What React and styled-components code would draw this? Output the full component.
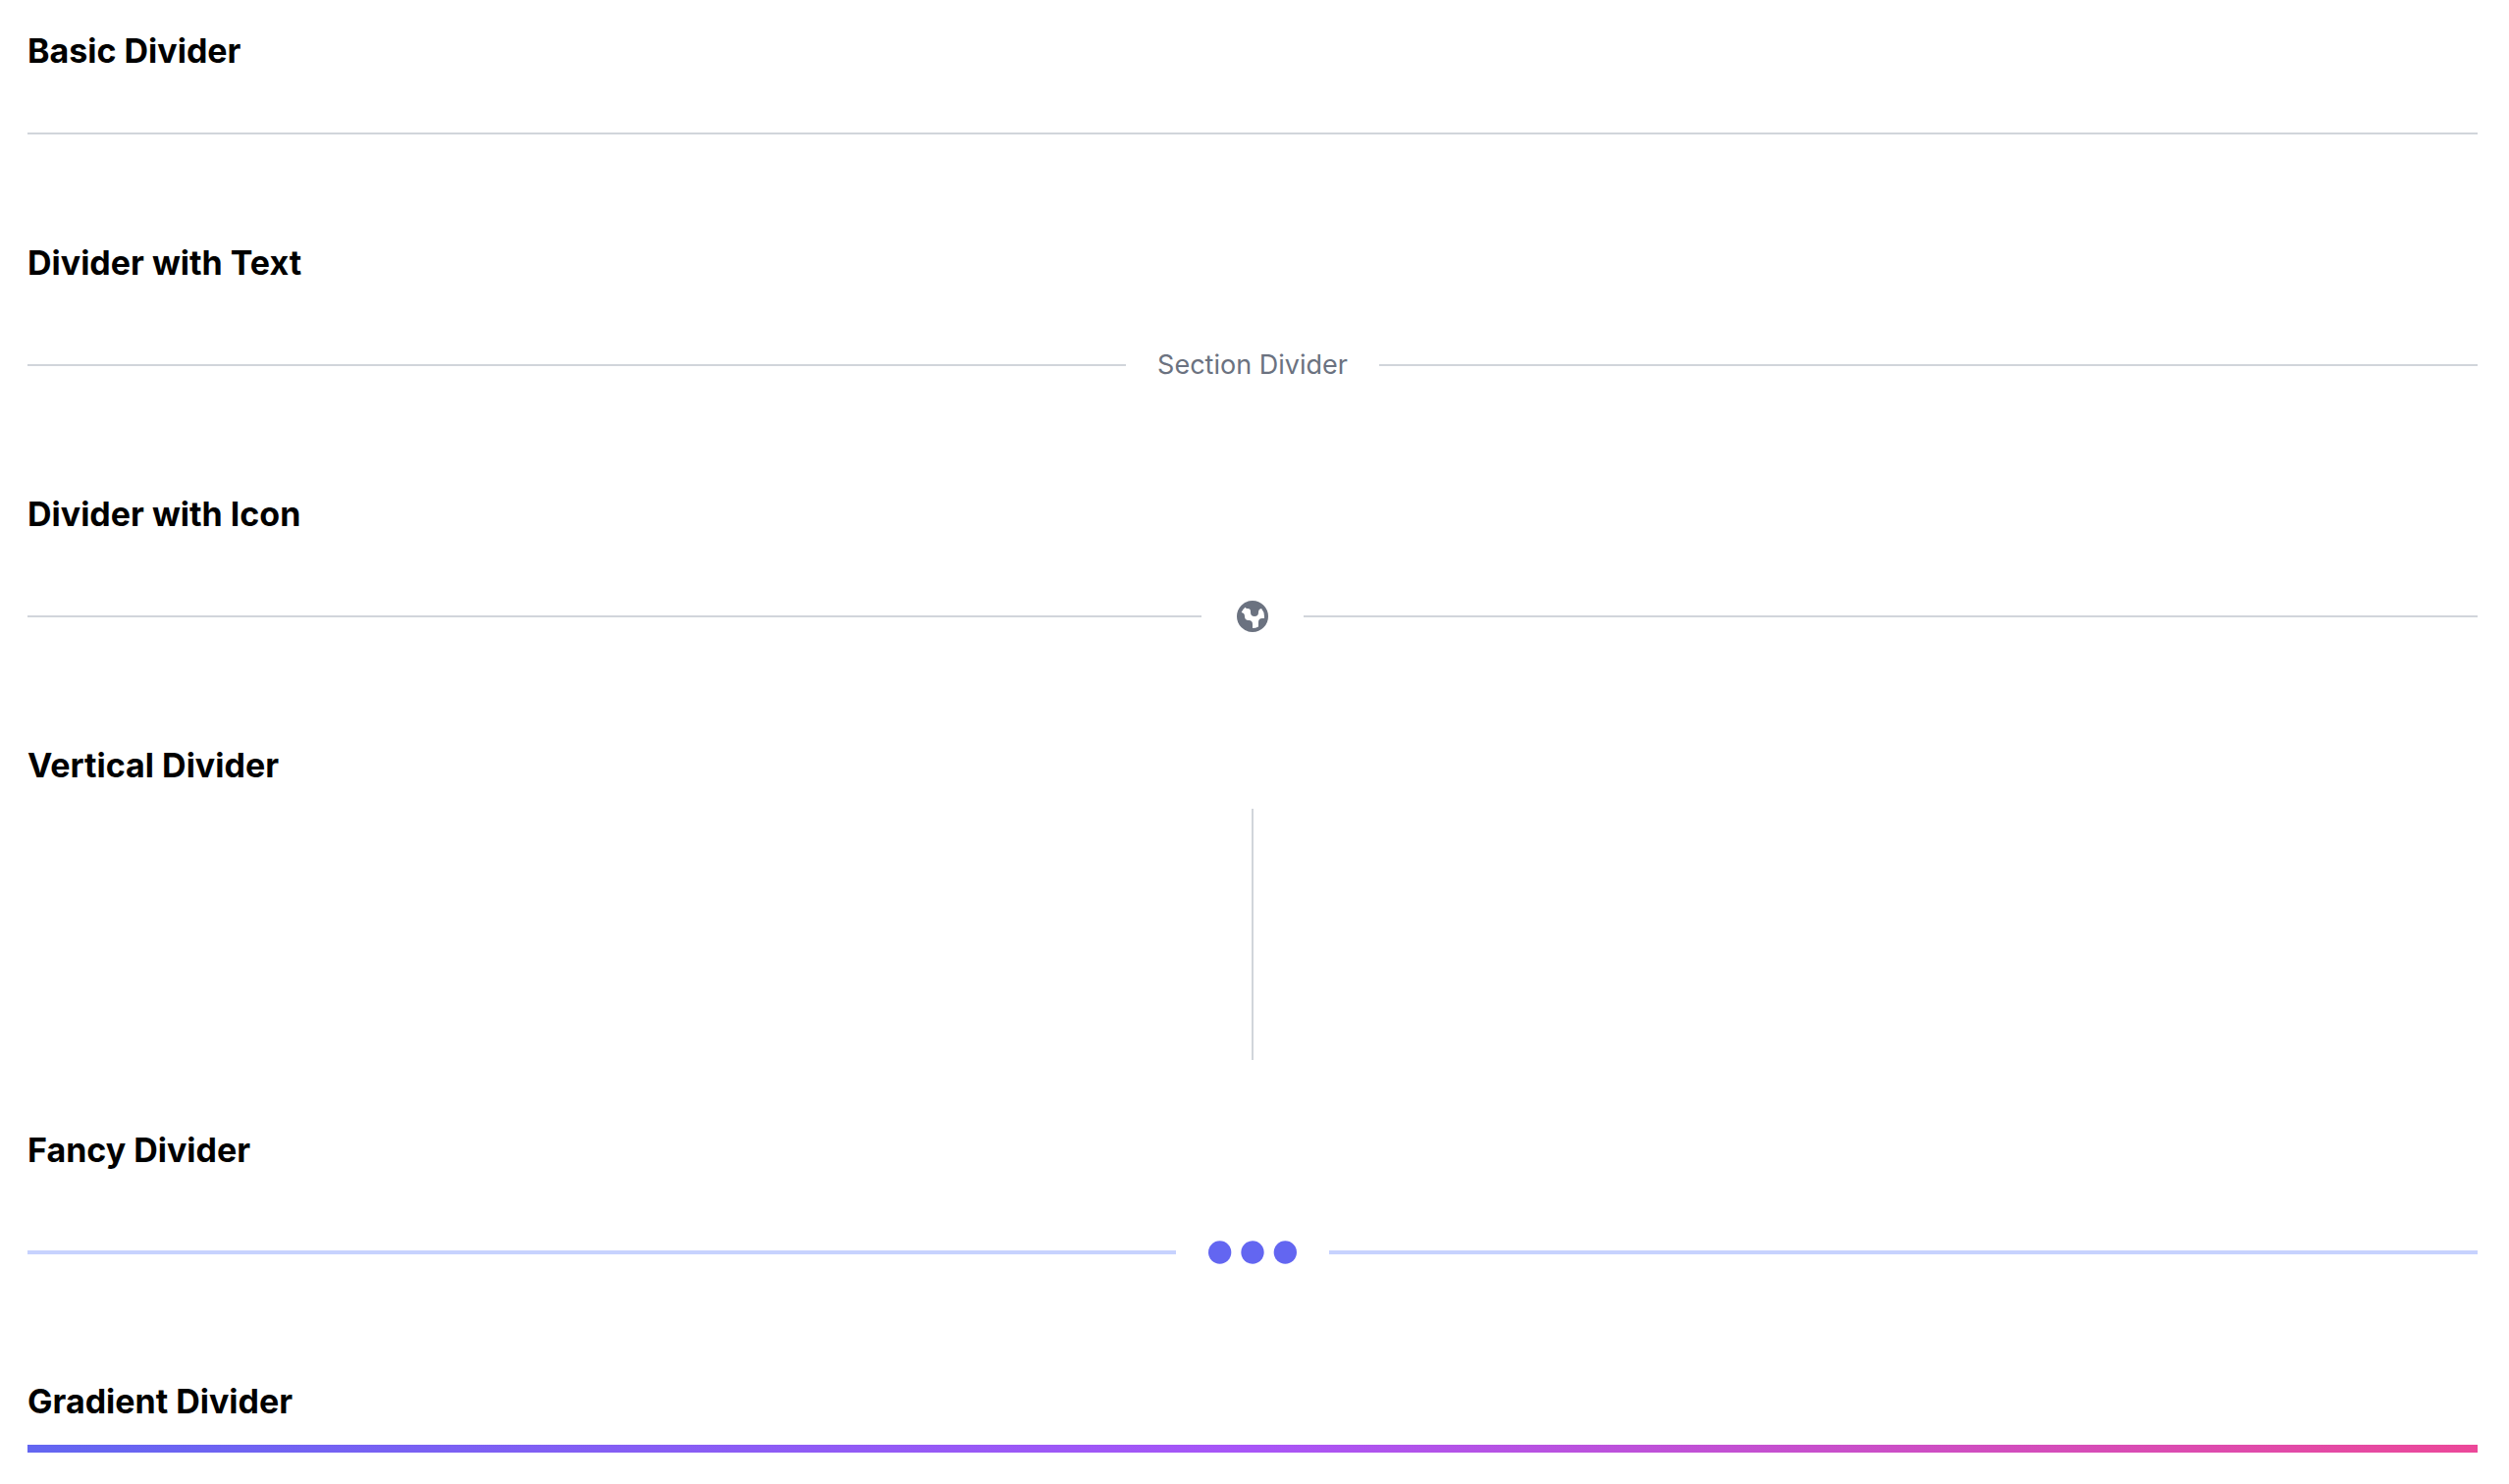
import React from 'react';
import styled, { createGlobalStyle } from 'styled-components';

const GlobalStyle = createGlobalStyle`
  body {
    margin: 0;
    background: #ffffff;
    font-family: Inter, "Liberation Sans", sans-serif;
  }
`

const Page = styled.main`
  display: flex;
  flex-direction: column;
  gap: 64px;
  padding: 24px 32px 32px 28px;
`

const Section = styled.section`
  display: flex;
  flex-direction: column;
  gap: 16px;
`

const Title = styled.h2`
  margin: 0;
  font-size: 34px;
  font-weight: 700;
  line-height: 56px;
  color: #000000;
`

const Row = styled.div`
  display: flex;
  align-items: center;
  gap: 32px;
  min-height: ${({ $plain }) => ($plain ? '80px' : '120px')};
`

const Line = styled.hr`
  flex: 1;
  height: ${({ $thick }) => ($thick ? '4px' : '2px')};
  margin: 0;
  border: 0;
  background: ${({ $color }) => $color || '#d1d5db'};
`

const Label = styled.span`
  font-size: 27px;
  line-height: 40px;
  color: #6b7280;
`

const Icon = styled.svg`
  display: block;
  height: 40px;
  fill: ${({ $color }) => $color || '#6b7280'};
`

const VerticalWrap = styled.div`
  display: flex;
  justify-content: center;
  height: 256px;
`

const VerticalLine = styled.div`
  width: 2px;
  background: #d1d5db;
`

const GradientLine = styled.div`
  height: 8px;
  background: linear-gradient(to right, #6366f1, #a855f7, #ec4899);
`

const GlobeIcon = () => (
  <Icon width="40" viewBox="0 0 20 20" aria-hidden="true">
    <path
      fillRule="evenodd"
      clipRule="evenodd"
      d="M10 18a8 8 0 100-16 8 8 0 000 16zM4.332 8.027a6.012 6.012 0 011.912-2.706C6.512 5.73 6.974 6 7.5 6A1.5 1.5 0 019 7.5V8a2 2 0 004 0 2 2 0 011.523-1.943A5.977 5.977 0 0116 10c0 .34-.028.675-.083 1H15a2 2 0 00-2 2v2.197A5.973 5.973 0 0110 16v-2a2 2 0 00-2-2 2 2 0 01-2-2 2 2 0 00-1.668-1.973z"
    />
  </Icon>
)

const DotsIcon = () => (
  <Icon width="92" viewBox="0 0 92 40" $color="#6366f1" aria-hidden="true">
    <circle cx="12.67" cy="20" r="11.67" />
    <circle cx="46" cy="20" r="11.67" />
    <circle cx="79.33" cy="20" r="11.67" />
  </Icon>
)

const Divider = ({ children, color, thick }) => (
  <Row $plain={!children}>
    <Line $color={color} $thick={thick} />
    {children}
    {children && <Line $color={color} $thick={thick} />}
  </Row>
)

const App = () => {
  return (
    <>
      <GlobalStyle />
      <Page>
        <Section>
          <Title>Basic Divider</Title>
          <Divider />
        </Section>
        <Section>
          <Title>Divider with Text</Title>
          <Divider>
            <Label>Section Divider</Label>
          </Divider>
        </Section>
        <Section>
          <Title>Divider with Icon</Title>
          <Divider>
            <GlobeIcon />
          </Divider>
        </Section>
        <Section>
          <Title>Vertical Divider</Title>
          <VerticalWrap>
            <VerticalLine />
          </VerticalWrap>
        </Section>
        <Section>
          <Title>Fancy Divider</Title>
          <Divider color="#c7d2fe" thick>
            <DotsIcon />
          </Divider>
        </Section>
        <Section>
          <Title>Gradient Divider</Title>
          <GradientLine />
        </Section>
      </Page>
    </>
  )
}

export default App;
